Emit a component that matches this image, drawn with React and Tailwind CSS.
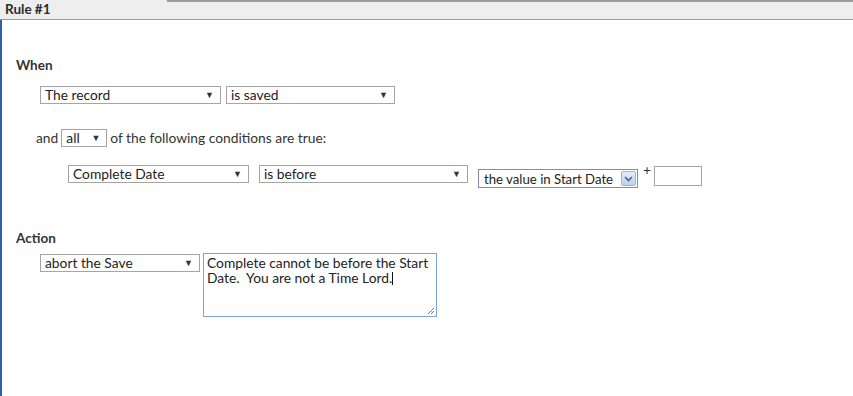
import React from "react";

const Select = ({ label, width, className = "" }) => (
  <div
    className={`flex items-center justify-between h-[18px] border border-[#a5a5a5] bg-white pl-[4px] pr-[6px] text-[13.8px] leading-[16px] text-[#222] ${className}`}
    style={{ width }}
  >
    <span className="whitespace-nowrap">{label}</span>
    <span className="text-[9px] text-[#333]">▼</span>
  </div>
);

const ValueSelect = () => (
  <div className="mt-[4px] flex items-center justify-between w-[160px] h-[19px] border border-[#8a86b4] bg-white pl-[5px] pr-[1px] text-[13.2px] leading-[16px] text-[#222]">
    <span className="whitespace-nowrap">the value in Start Date</span>
    <span className="flex items-center justify-center w-[15px] h-[15px] rounded-[2px] border border-[#98b4e0] bg-gradient-to-b from-[#e3ecfb] to-[#bcd0f0]">
      <svg width="9" height="6" viewBox="0 0 9 6">
        <path d="M1 1 L4.5 4.5 L8 1" fill="none" stroke="#4d6185" strokeWidth="1.6" />
      </svg>
    </span>
  </div>
);

export default function App() {
  return (
    <div className="w-[853px] h-[396px] bg-white overflow-hidden font-['Lato','Open_Sans',sans-serif] text-[#333]">
      <div className="relative h-[20px] bg-[#eeeeee] border-b border-[#9c9c9c]">
        <div className="absolute left-[167px] right-0 top-0 h-[2px] bg-[#9c9c9c]" />
        <div className="pl-[5px] pt-[1px] text-[13.5px] leading-[17px] font-bold text-[#2b2b2b]">
          Rule #1
        </div>
      </div>

      <div className="h-[376px] border-l-2 border-[#2d62a3] pl-[14px]">
        <div className="pt-[37px] text-[13.5px] leading-[16px] font-bold text-[#333]">When</div>

        <div className="mt-[13px] ml-[24px] flex gap-[5px]">
          <Select label="The record" width={181} />
          <Select label="is saved" width={169} />
        </div>

        <div className="mt-[25px] ml-[20px] flex items-center text-[13.8px] leading-[16px] text-[#333]">
          <span>and</span>
          <Select label="all" width={46} className="ml-[3px] mr-[3px]" />
          <span>of the following conditions are true:</span>
        </div>

        <div className="mt-[18px] ml-[52px] flex items-start">
          <Select label="Complete Date" width={181} />
          <Select label="is before" width={209} className="ml-[10px]" />
          <div className="ml-[10px]">
            <ValueSelect />
          </div>
          <span className="ml-[5px] -mt-[3px] text-[13.8px] leading-[16px] text-[#333]">+</span>
          <div className="ml-[3px] mt-[1px] w-[48px] h-[20px] border border-[#a5a5a5] bg-white" />
        </div>

        <div className="mt-[42px] text-[13.5px] leading-[16px] font-bold text-[#333]">Action</div>

        <div className="mt-[7px] ml-[24px] flex items-start">
          <Select label="abort the Save" width={160} className="mt-[1px]" />
          <div className="relative ml-[3px] w-[234px] h-[64px] border border-[#7da2e3] bg-white px-[3px] pt-[1px] text-[13.8px] leading-[15px] text-[#222]">
            Complete cannot be before the Start Date.&nbsp; You are not a Time Lord.
            <span className="inline-block w-[1px] h-[13px] bg-[#111] align-[-2px]" />
            <svg className="absolute right-[1px] bottom-[1px]" width="8" height="8" viewBox="0 0 8 8">
              <path d="M7 1 L1 7 M7 4 L4 7" stroke="#777" strokeWidth="1" />
            </svg>
          </div>
        </div>
      </div>
    </div>
  );
}
